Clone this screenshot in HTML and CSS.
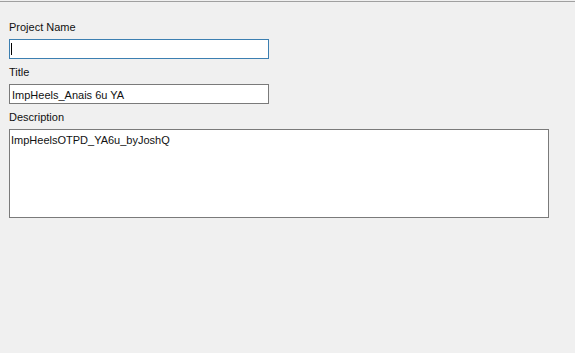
FILE: index.html
```html
<!DOCTYPE html>
<html lang="en">
<head>
    <meta charset="UTF-8">
    <meta name="viewport" content="width=device-width, initial-scale=1.0">
    <title>Project Properties</title>
    <link rel="stylesheet" href="styles.css">
</head>
<body>
    <div class="topline"></div>
    <div class="form">
        <div class="field">
            <label class="field-label" for="project-name">Project Name</label>
            <div class="box-wrap">
                <input id="project-name" class="textbox focused" type="text" value="">
                <span class="caret"></span>
            </div>
        </div>
        <div class="field">
            <label class="field-label" for="title">Title</label>
            <input id="title" class="textbox" type="text" value="ImpHeels_Anais 6u YA">
        </div>
        <div class="field">
            <label class="field-label" for="description">Description</label>
            <textarea id="description" class="textarea">ImpHeelsOTPD_YA6u_byJoshQ</textarea>
        </div>
    </div>
</body>
</html>
```

FILE: styles.css
```css
body {
    margin: 0;
    background-color: #f0f0f0;
    font-family: "Liberation Sans", Arial, sans-serif;
    font-size: 11px;
    color: #111;
}

.topline {
    margin-top: 1px;
    height: 1px;
    background-color: #a0a0a0;
}

.form {
    padding: 17px 0 0 9px;
}

.field {
    display: flex;
    flex-direction: column;
    align-items: flex-start;
    margin-bottom: 5px;
}

.field-label {
    line-height: 16px;
    margin-bottom: 4px;
}

.box-wrap {
    position: relative;
}

.textbox,
.textarea {
    box-sizing: border-box;
    margin: 0;
    border: 1px solid #7a7a7a;
    background-color: #fff;
    font-family: "Liberation Sans", Arial, sans-serif;
    font-size: 11px;
    color: #111;
    outline: none;
}

.textbox {
    width: 260px;
    height: 20px;
    padding: 1px 1px 0 2px;
}

.textbox.focused {
    border-color: #3c7fb1;
}

.caret {
    position: absolute;
    left: 2px;
    top: 4px;
    width: 1px;
    height: 12px;
    background-color: #000;
}

.textarea {
    width: 540px;
    height: 89px;
    padding: 3px 2px 2px 1px;
    resize: none;
    line-height: 15px;
}
```
